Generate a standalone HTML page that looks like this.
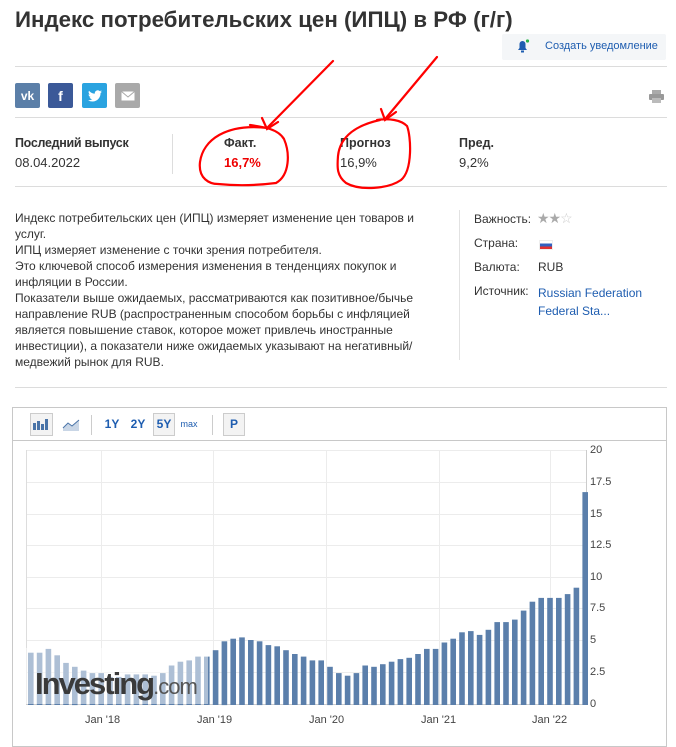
<!DOCTYPE html>
<html><head><meta charset="utf-8"><style>
*{margin:0;padding:0;box-sizing:border-box}
body{width:676px;height:736px;overflow:hidden;background:#fff;font-family:"Liberation Sans",Arial,sans-serif;color:#333;position:relative}
.a{position:absolute}
.hr{position:absolute;left:15px;width:652px;height:1px;background:#dcdcdc}
h1{position:absolute;left:15px;top:7px;font-size:22.3px;font-weight:bold;color:#333;letter-spacing:0px;white-space:nowrap}
.sb{position:absolute;top:83px;width:25px;height:25px;border-radius:2px;color:#fff;font-weight:bold;font-size:12px;display:flex;align-items:center;justify-content:center}
.lbl{font-size:12.5px;font-weight:bold;color:#333}
.val{font-size:13px;color:#333}
.d{position:absolute;left:15px;top:210px;width:410px;font-size:12px;line-height:16px;color:#333}
.r{position:absolute;font-size:12px;color:#333}
.tb{position:absolute;top:413px;height:22px;font-size:12px;font-weight:bold;color:#1e5db0;display:flex;align-items:center;justify-content:center}
.ax{position:absolute;left:590px;font-size:11px;color:#444}
.xl{position:absolute;top:714px;font-size:11px;color:#444}
</style></head><body>
<h1>Индекс потребительских цен (ИПЦ) в РФ (г/г)</h1>
<div class="a" style="left:502px;top:34px;width:164px;height:26px;background:#f4f6f8;border-radius:2px"></div>
<svg class="a" style="left:515px;top:38px" width="16" height="16" viewBox="0 0 16 16"><path d="M3 12h9l-1.5-2V6a3 3 0 0 0-6 0v4z" fill="#1e5db0"/><rect x="6" y="12.5" width="3" height="2" fill="#1e5db0"/><circle cx="12.5" cy="3" r="1.6" fill="#2bb34a"/></svg>
<div class="a" style="left:545px;top:40px;font-size:11px;color:#1e5db0">Создать уведомление</div>
<div class="hr" style="top:66px"></div>
<div class="sb" style="left:15px;background:#5b7fa8">vk</div>
<div class="sb" style="left:48px;background:#3b5998;font-size:14px">f</div>
<div class="sb" style="left:82px;background:#2aa3e0">
<svg width="14" height="12" viewBox="0 0 24 20"><path d="M24 2.4a10 10 0 0 1-2.8.8A5 5 0 0 0 23.3.4a10 10 0 0 1-3.1 1.2A5 5 0 0 0 11.8 6 14 14 0 0 1 1.7.9a5 5 0 0 0 1.5 6.6A5 5 0 0 1 1 6.9 5 5 0 0 0 4.9 11.8a5 5 0 0 1-2.2.1 5 5 0 0 0 4.6 3.4A10 10 0 0 1 0 17.3 14 14 0 0 0 7.5 19.5c9 0 14-7.5 14-14v-.6A10 10 0 0 0 24 2.4z" fill="#fff"/></svg></div>
<div class="sb" style="left:115px;background:#a9a9a9"><svg width="14" height="10" viewBox="0 0 14 10"><rect x=".5" y=".5" width="13" height="9" fill="#fff"/><path d="M.5 .5 7 6l6.5-5.5" stroke="#a9a9a9" fill="none"/></svg></div>
<svg class="a" style="left:649px;top:89px" width="15" height="15" viewBox="0 0 15 15"><rect x="3" y="1" width="9" height="4" fill="#aaa"/><rect x="0" y="5" width="15" height="6" rx="1" fill="#999"/><rect x="3" y="9" width="9" height="5" fill="#bbb"/></svg>
<div class="hr" style="top:117px"></div>
<div class="a lbl" style="left:15px;top:136px;letter-spacing:-0.3px">Последний выпуск</div>
<div class="a val" style="left:15px;top:155px">08.04.2022</div>
<div class="a" style="left:172px;top:134px;width:1px;height:40px;background:#ddd"></div>
<div class="a lbl" style="left:224px;top:136px">Факт.</div>
<div class="a val" style="left:224px;top:155px;color:#e00;font-weight:bold">16,7%</div>
<div class="a lbl" style="left:340px;top:136px">Прогноз</div>
<div class="a val" style="left:340px;top:155px">16,9%</div>
<div class="a lbl" style="left:459px;top:136px">Пред.</div>
<div class="a val" style="left:459px;top:155px">9,2%</div>
<div class="hr" style="top:186px"></div>
<div class="d">Индекс потребительских цен (ИПЦ) измеряет изменение цен товаров и услуг.<br>ИПЦ измеряет изменение с точки зрения потребителя.<br>Это ключевой способ измерения изменения в тенденциях покупок и инфляции в России.<br>Показатели выше ожидаемых, рассматриваются как позитивное/бычье направление RUB (распространенным способом борьбы с инфляцией является повышение ставок, которое может привлечь иностранные инвестиции), а показатели ниже ожидаемых указывают на негативный/ медвежий рынок для RUB.</div>
<div class="a" style="left:459px;top:210px;width:1px;height:150px;background:#e2e2e2"></div>
<div class="r" style="left:474px;top:212px">Важность:</div>
<div class="r" style="left:537px;top:210px;font-size:14px;color:#aaa;letter-spacing:-1px">★★<span style="color:#ccc">☆</span></div>
<div class="r" style="left:474px;top:236px">Страна:</div>
<div class="a" style="left:539px;top:240px;width:14px;height:10px;background:linear-gradient(#fff 0 33%,#3060c0 33% 66%,#e03030 66%);border:1px solid #eee"></div>
<div class="r" style="left:474px;top:260px">Валюта:</div>
<div class="r" style="left:538px;top:260px">RUB</div>
<div class="r" style="left:474px;top:284px">Источник:</div>
<div class="r" style="left:538px;top:284px;color:#1e5db0;line-height:18px">Russian Federation<br>Federal Sta...</div>
<div class="hr" style="top:387px"></div>
<div class="a" style="left:12px;top:407px;width:655px;height:340px;border:1px solid #c8c8c8"></div>
<div class="a" style="left:12px;top:440px;width:655px;height:1px;background:#c8c8c8"></div>
<div class="a" style="left:30px;top:413px;width:23px;height:23px;border:1px solid #ccc;background:#f3f3f3"></div>
<svg class="a" style="left:33px;top:418px" width="16" height="12"><rect x="0" y="5" width="3" height="7" fill="#4a74a8"/><rect x="4" y="3" width="3" height="9" fill="#4a74a8"/><rect x="8" y="6" width="3" height="6" fill="#4a74a8"/><rect x="12" y="1" width="3" height="11" fill="#4a74a8"/></svg>
<svg class="a" style="left:62px;top:418px" width="18" height="14"><path d="M1 10 6 5l4 3 7-6v11H1z" fill="#c9d6e6"/><path d="M1 10 6 5l4 3 7-6" stroke="#4a74a8" fill="none"/></svg>
<div class="a" style="left:91px;top:415px;width:1px;height:20px;background:#ccc"></div>
<div class="tb" style="left:102px;width:20px">1Y</div>
<div class="tb" style="left:128px;width:20px">2Y</div>
<div class="a" style="left:153px;top:413px;width:22px;height:23px;border:1px solid #ccc;background:#f3f3f3"></div>
<div class="tb" style="left:153px;width:22px">5Y</div>
<div class="tb" style="left:179px;width:20px;font-size:9px;font-weight:normal">max</div>
<div class="a" style="left:212px;top:415px;width:1px;height:20px;background:#ccc"></div>
<div class="a" style="left:223px;top:413px;width:22px;height:23px;border:1px solid #ccc;background:#f3f3f3"></div>
<div class="tb" style="left:223px;width:22px">P</div>
<svg class="a" style="left:0;top:440px" width="676" height="296" id="ch"></svg>
<div class="ax" style="top:444px">20</div><div class="ax" style="top:476px">17.5</div><div class="ax" style="top:508px">15</div><div class="ax" style="top:539px">12.5</div><div class="ax" style="top:571px">10</div><div class="ax" style="top:602px">7.5</div><div class="ax" style="top:634px">5</div><div class="ax" style="top:666px">2.5</div><div class="ax" style="top:698px">0</div>
<div class="xl" style="left:85px">Jan '18</div><div class="xl" style="left:197px">Jan '19</div><div class="xl" style="left:309px">Jan '20</div><div class="xl" style="left:421px">Jan '21</div><div class="xl" style="left:532px">Jan '22</div>
<div class="a" style="left:35px;top:666px;font-size:31px;font-weight:bold;color:#3a3a3a;letter-spacing:-2px">Investing<span style="font-weight:normal;font-size:22px;color:#555;letter-spacing:-1px">.com</span></div>
<svg class="a" style="left:0;top:0" width="676" height="736" fill="none" stroke="#f00" stroke-width="2.2" stroke-linecap="round">
<path d="M333 61 268 127"/><path d="M262 118 267 129 278 122"/>
<path d="M437 57 386 118"/><path d="M381 109 385 120 396 112"/>
<path d="M268 128C226 123 203 140 200 162c-2 17 10 22 18 22 20 2 42 1 58-1 14-8 14-30 8-44-6-10-20-12-34-14"/>
<path d="M380 120c-23 5-40 16-42 36-1 12-1 20 8 27 14 8 42 6 55-3 12-10 10-44 6-54-6-6-18-8-30-6"/>
</svg>
<script>
var v=[4.1,4.1,4.4,3.9,3.3,3.0,2.7,2.5,2.5,2.2,2.2,2.4,2.4,2.4,2.3,2.5,3.1,3.4,3.5,3.8,3.8,4.3,5.0,5.2,5.3,5.1,5.0,4.7,4.6,4.3,4.0,3.8,3.5,3.5,3.0,2.5,2.3,2.5,3.1,3.0,3.2,3.4,3.6,3.7,4.0,4.4,4.4,4.9,5.2,5.7,5.8,5.5,5.9,6.5,6.5,6.7,7.4,8.1,8.4,8.4,8.4,8.7,9.2,16.7];
var s='';
[10,42,74,105,137,168,200,232].forEach(function(y){s+='<rect x="26" y="'+y+'" width="560" height="1" fill="#ececec"/>';});
[101,213,326,439,550].forEach(function(x){s+='<rect x="'+x+'" y="10" width="1" height="255" fill="#ececec"/>';});
s+='<rect x="26" y="10" width="1" height="255" fill="#ddd"/><rect x="586" y="10" width="1" height="255" fill="#ccc"/><rect x="26" y="264" width="560" height="1" fill="#ccc"/>';
for(var i=0;i<v.length;i++){var h=v[i]*12.75,x=28+i*8.8;s+='<rect x="'+x.toFixed(1)+'" y="'+(265-h).toFixed(1)+'" width="5.6" height="'+h.toFixed(1)+'" fill="#5b7fab"/>';}
s+='<rect x="26" y="208" width="182" height="56" fill="#fff" opacity="0.5"/>';
document.getElementById('ch').innerHTML=s;
</script>
</body></html>
